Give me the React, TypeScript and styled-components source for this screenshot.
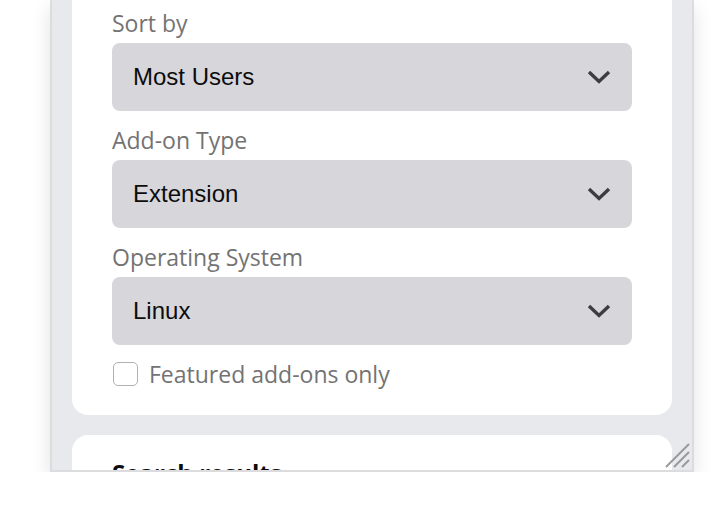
import React from 'react';
import styled, { createGlobalStyle } from 'styled-components';

const GlobalStyle = createGlobalStyle`
  html, body {
    margin: 0;
    padding: 0;
    background: #ffffff;
  }
  body {
    font-family: 'Open Sans', 'Liberation Sans', sans-serif;
  }
`;

const Window = styled.div`
  position: relative;
  margin-left: 50px;
  width: 640px;
  height: 470px;
  border: 2px solid #dcdcde;
  border-top: none;
  background-color: #e8e9ec;
  box-shadow: 0 8px 18px rgba(0, 0, 0, 0.12);
  overflow: hidden;
`;

const Scroller = styled.div`
  display: flex;
  flex-direction: column;
  gap: 20px;
  padding: 0 20px;
  margin-top: -20px;
`;

const Card = styled.section<{ padTop: number; padBottom: number }>`
  background-color: #ffffff;
  border-radius: 16px;
  padding: ${({ padTop, padBottom }) => `${padTop}px 40px ${padBottom}px`};
  display: flex;
  flex-direction: column;
`;

const Field = styled.div`
  display: flex;
  flex-direction: column;
  margin-bottom: 14px;
`;

const Label = styled.label`
  height: 30px;
  line-height: 30px;
  margin-bottom: 5px;
  font-size: 23px;
  color: #737373;
`;

const Select = styled.div`
  height: 68px;
  border-radius: 8px;
  background-color: #d7d7db;
  display: flex;
  align-items: center;
  justify-content: space-between;
  padding: 0 21px;
  font-family: 'Liberation Sans', Arial, sans-serif;
  font-size: 24px;
  color: #0c0c0d;
`;

const CheckRow = styled.label`
  display: flex;
  align-items: center;
  gap: 11px;
  height: 30px;
  margin-top: 0;
  font-size: 23px;
  color: #737373;
`;

const Box = styled.span`
  width: 23px;
  height: 22px;
  margin-left: 1px;
  border: 1px solid #b1b1b3;
  border-radius: 5px;
  background: #ffffff;
`;

const Title = styled.h2`
  margin: 0;
  font-size: 24px;
  font-weight: 700;
  color: #0c0c0d;
`;

const Grip = styled.svg`
  position: absolute;
  right: 2px;
  bottom: 2px;
`;

const Chevron = () => (
  <svg width="24" height="14" viewBox="0 0 24 14">
    <path d="M2 2 L12 11.5 L22 2" fill="none" stroke="#3d3d3f" strokeWidth="3.4" />
  </svg>
);

const fields = [
  { label: 'Sort by', value: 'Most Users' },
  { label: 'Add-on Type', value: 'Extension' },
  { label: 'Operating System', value: 'Linux' },
];

export default function App() {
  return (
    <>
      <GlobalStyle />
      <Window>
        <Scroller>
          <Card padTop={28} padBottom={26}>
            {fields.map((f) => (
              <Field key={f.label}>
                <Label>{f.label}</Label>
                <Select>
                  {f.value}
                  <Chevron />
                </Select>
              </Field>
            ))}
            <CheckRow>
              <Box />
              Featured add-ons only
            </CheckRow>
          </Card>
          <Card padTop={21} padBottom={24}>
            <Title>Search results</Title>
          </Card>
        </Scroller>
        <Grip width="26" height="26" viewBox="0 0 26 26">
          <path d="M2 25 L25 2 M10 25 L25 10 M18 25 L25 18" stroke="#9a9a9c" strokeWidth="2" />
        </Grip>
      </Window>
    </>
  );
}
